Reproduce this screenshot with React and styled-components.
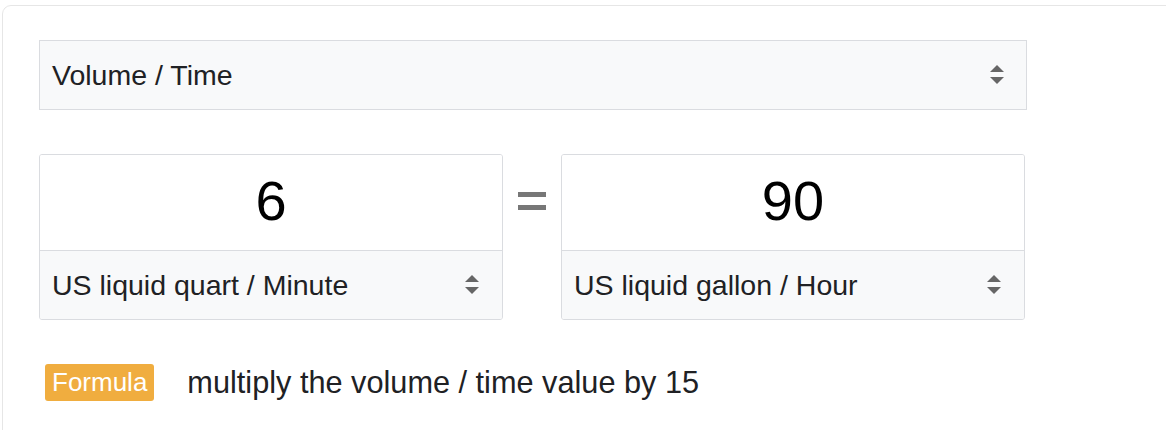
import React, { useState } from 'react';
import styled, { createGlobalStyle } from 'styled-components';

const GlobalStyle = createGlobalStyle`
  body {
    margin: 0;
    background: #fff;
    font-family: "Liberation Sans", Arial, sans-serif;
    overflow: hidden;
  }
`;

const Card = styled.div`
  margin: 5px 0 0 2px;
  width: 1200px;
  min-height: 460px;
  box-sizing: border-box;
  border: 1px solid #e6e6e6;
  border-radius: 9px;
  padding: 34px 36px;
`;

const Stack = styled.div`
  width: 988px;
  display: flex;
  flex-direction: column;
`;

const SelectBox = styled.div`
  display: flex;
  align-items: center;
  justify-content: space-between;
  box-sizing: border-box;
  height: ${(p) => p.$height}px;
  padding: 0 ${(p) => p.$right}px 0 12px;
  background: #f8f9fa;
  color: #202124;
  font-size: 28.5px;
  border: ${(p) => (p.$bare ? 'none' : '1px solid #dadce0')};
  border-top: ${(p) => (p.$divider ? '1px solid #dadce0' : undefined)};
`;

const Row = styled.div`
  display: flex;
  align-items: flex-start;
  gap: 15px;
  margin-top: 44px;
`;

const Panel = styled.div`
  width: 464px;
  height: 166px;
  box-sizing: border-box;
  border: 1px solid #dadce0;
  border-radius: 3px;
  display: flex;
  flex-direction: column;
  overflow: hidden;
`;

const ValueInput = styled.input`
  height: 95px;
  border: none;
  outline: none;
  text-align: center;
  font-family: "Liberation Sans", Arial, sans-serif;
  font-size: 56px;
  color: #000;
  padding: 0 0 4px;
  box-sizing: border-box;
  background: #fff;
`;

const Equals = styled.div`
  width: 28px;
  display: flex;
  flex-direction: column;
  gap: 8px;
  margin-top: 38px;
  &::before,
  &::after {
    content: '';
    display: block;
    height: 5px;
    background: #777;
  }
`;

const FormulaRow = styled.div`
  display: flex;
  align-items: center;
  gap: 33px;
  margin: 44px 0 0 6px;
`;

const Badge = styled.span`
  background: #f0ad3f;
  color: #fff;
  font-size: 26px;
  padding: 5px 7px;
  border-radius: 3px;
  line-height: 27px;
`;

const FormulaText = styled.span`
  font-size: 30.7px;
  color: #202124;
`;

const Arrows = () => (
  <svg width="14" height="22" viewBox="0 0 14 22">
    <polygon points="0,8 7,1 14,8" fill="#666" />
    <polygon points="0,13 14,13 7,20" fill="#666" />
  </svg>
);

const UnitPanel = ({ value, unit }) => {
  const [v, setV] = useState(value);
  return (
    <Panel>
      <ValueInput value={v} onChange={(e) => setV(e.target.value)} />
      <SelectBox $height={69} $right={23} $bare $divider>
        <span>{unit}</span>
        <Arrows />
      </SelectBox>
    </Panel>
  );
};

const App = () => (
  <>
    <GlobalStyle />
    <Card>
      <Stack>
        <SelectBox $height={70} $right={22}>
          <span>Volume / Time</span>
          <Arrows />
        </SelectBox>
        <Row>
          <UnitPanel value="6" unit="US liquid quart / Minute" />
          <Equals />
          <UnitPanel value="90" unit="US liquid gallon / Hour" />
        </Row>
      </Stack>
      <FormulaRow>
        <Badge>Formula</Badge>
        <FormulaText>multiply the volume / time value by 15</FormulaText>
      </FormulaRow>
    </Card>
  </>
);

export default App;
